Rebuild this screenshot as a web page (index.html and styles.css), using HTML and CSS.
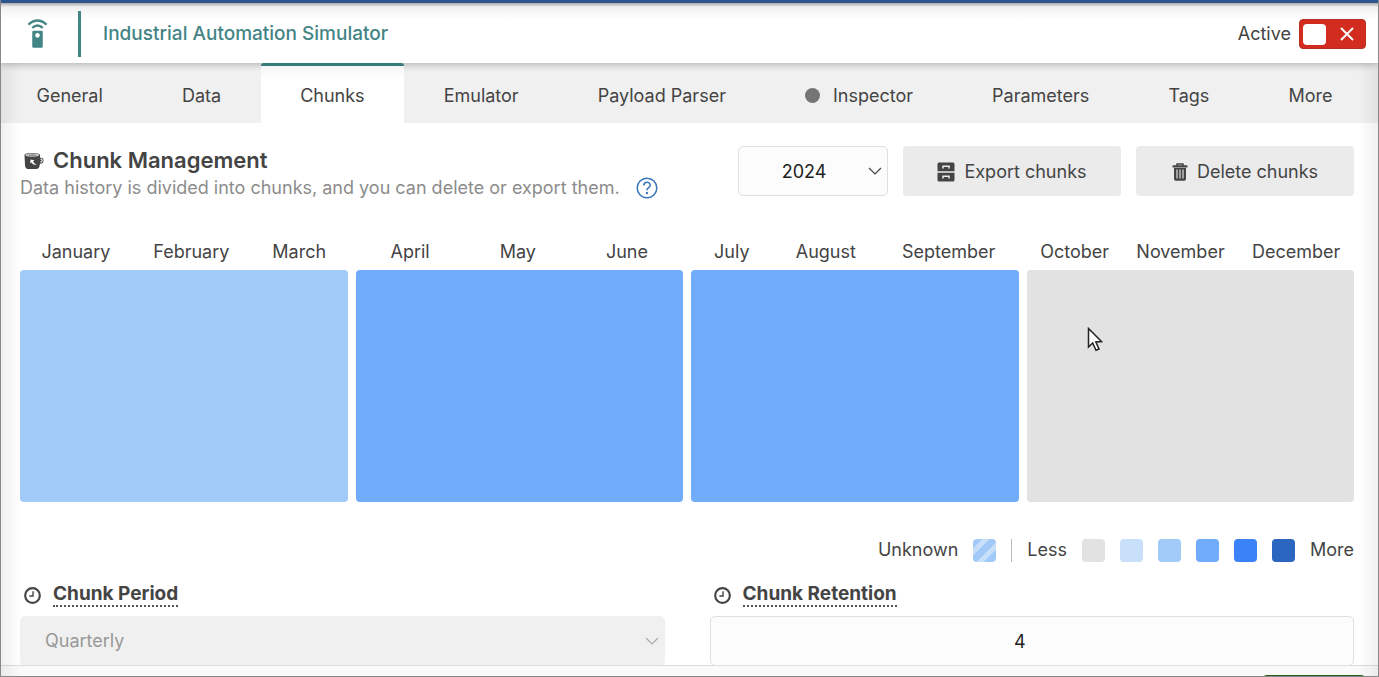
FILE: index.html
```
<!DOCTYPE html>
<html lang="en">
<head>
<meta charset="utf-8">
<meta name="viewport" content="width=device-width, initial-scale=1">
<title>Industrial Automation Simulator</title>
<link rel="stylesheet" href="styles.css">
</head>
<body>
<div class="app">
  <header class="header">
    <svg class="device-icon" viewBox="0 0 22 32" aria-hidden="true">
      <g fill="none" stroke="currentColor" stroke-width="2.4" stroke-linecap="butt">
        <path d="M1.500 6.200Q11-2.400 20.500 6.200"/>
        <path d="M5.500 9.600Q11 4.600 16.500 9.600"/>
      </g>
      <path fill="currentColor" fill-rule="evenodd" d="M7 12.500h8q1.500 0 1.500 1.500v15q0 1.500-1.500 1.500H7Q5.500 30.500 5.500 29V14Q5.500 12.500 7 12.500zM11 15a2.400 2.400 0 1 0 0 4.800 2.400 2.400 0 1 0 0-4.800z"/>
    </svg>
    <h1 class="device-name">Industrial Automation Simulator</h1>
    <label class="active-label" for="active">Active</label>
    <span class="switch">
      <input class="switch-input" type="checkbox" id="active">
      <svg class="switch-cross" viewBox="0 0 14 14" aria-hidden="true"><path d="M1 1l12 12M13 1L1 13" fill="none" stroke="currentColor" stroke-width="2"/></svg>
    </span>
  </header>
  <nav class="tabs">
    <a class="tab" href="#general">General</a>
    <a class="tab" href="#data">Data</a>
    <a class="tab tab-current" href="#chunks" aria-current="page">Chunks</a>
    <a class="tab" href="#emulator">Emulator</a>
    <a class="tab" href="#parser">Payload Parser</a>
    <a class="tab" href="#inspector"><span class="dot"></span>Inspector</a>
    <a class="tab" href="#parameters">Parameters</a>
    <a class="tab" href="#tags">Tags</a>
    <a class="tab" href="#more">More</a>
  </nav>
  <main class="content">
    <section class="toolbar">
      <div class="intro">
        <h2 class="title">
          <svg class="title-icon" viewBox="0 0 20 18" aria-hidden="true">
            <path fill="currentColor" d="M.5 3C.5.300 16 .300 16 3v2.800c2.300-.3 3.500.7 3.500 2.700 0 2.300-1.300 3.300-3.500 3.200L15.500 14c-.2 2-1.500 3-3.500 3H5c-2.500 0-3.800-1.200-4-3.600z"/>
            <ellipse cx="8.200" cy="3.100" rx="6.400" ry="1" fill="none" stroke="#fff" stroke-width=".9"/>
            <path fill="#fff" d="M6.500 7.500l3.800.8-1.100 1.300c.7 1.700 2 2.700 4 3-2.900.5-4.800-.5-5.600-2.200l-1.300.8z"/>
            <path fill="none" stroke="#fff" stroke-width="1.100" d="M16.500 7.300q1.700-.2 1.600 1.300t-1.600 1.700"/>
          </svg>
          Chunk Management
        </h2>
        <p class="subtitle">Data history is divided into chunks, and you can delete or export them.
          <a class="help" href="#help" aria-label="Help">
            <svg class="help-icon" viewBox="0 0 22 22" aria-hidden="true">
              <circle cx="11" cy="11" r="9.800" fill="none" stroke="currentColor" stroke-width="1.500"/>
              <path d="M7.800 8.500C7.900 4.200 14.200 4.300 14.200 8.200c0 2.500-3.200 2.500-3.200 5" fill="none" stroke="currentColor" stroke-width="1.600"/>
              <circle cx="11" cy="16" r="1.200" fill="currentColor"/>
            </svg>
          </a>
        </p>
      </div>
      <div class="select-wrap year">
        <select class="field year-select" aria-label="Year"><option>2024</option></select>
        <svg class="chevron" viewBox="0 0 14 8" aria-hidden="true"><path d="M1 1l6 6 6-6" fill="none" stroke="currentColor" stroke-width="1.200"/></svg>
      </div>
      <button class="button" type="button">
        <svg class="cabinet-icon" viewBox="0 0 18 20" aria-hidden="true">
          <path fill="currentColor" d="M2 .5h14q1.500 0 1.500 1.500v7.200H.5V2Q.5.500 2 .500zM.5 10.800h17V18q0 1.500-1.500 1.500H2Q.5 19.500.5 18z"/>
          <path fill="none" stroke="#ebebeb" stroke-width="1.500" d="M6 6.500V4.300h6v2.200M6 16.500v-2.200h6v2.200"/>
        </svg>
        Export chunks
      </button>
      <button class="button" type="button">
        <svg class="trash-icon" viewBox="0 0 16 18" aria-hidden="true">
          <path fill="none" stroke="currentColor" stroke-width="1.500" d="M5 3V1h6v2"/>
          <path fill="currentColor" d="M.5 3Q.5 2.300 1.200 2.300h13.600q.7 0 .7.700v1.500H.5zM2 5h12v11q0 1.700-1.700 1.700H3.700Q2 17.700 2 16z"/>
          <path stroke="#ebebeb" stroke-width="1.100" d="M5 6.500v9M8 6.500v9M11 6.500v9"/>
        </svg>
        Delete chunks
      </button>
    </section>

    <section class="quarters">
      <div class="quarter">
        <div class="months"><span>January</span><span>February</span><span>March</span></div>
        <button class="chunk level-2" type="button" aria-label="January to March"></button>
      </div>
      <div class="quarter">
        <div class="months"><span>April</span><span>May</span><span>June</span></div>
        <button class="chunk level-3" type="button" aria-label="April to June"></button>
      </div>
      <div class="quarter">
        <div class="months"><span>July</span><span>August</span><span>September</span></div>
        <button class="chunk level-3" type="button" aria-label="July to September"></button>
      </div>
      <div class="quarter">
        <div class="months"><span>October</span><span>November</span><span>December</span></div>
        <button class="chunk level-0" type="button" aria-label="October to December"></button>
      </div>
    </section>

    <div class="legend">
      <span>Unknown</span>
      <span class="swatch unknown"></span>
      <span class="divider"></span>
      <span>Less</span>
      <span class="swatch level-0"></span>
      <span class="swatch level-1"></span>
      <span class="swatch level-2"></span>
      <span class="swatch level-3"></span>
      <span class="swatch level-4"></span>
      <span class="swatch level-5"></span>
      <span>More</span>
    </div>

    <form class="settings">
      <div class="setting">
        <div class="setting-head">
          <svg class="clock-icon" viewBox="0 0 16 16" aria-hidden="true"><circle cx="8" cy="8" r="6.900" fill="none" stroke="currentColor" stroke-width="2"/><path d="M8.500 4v4.500H5" fill="none" stroke="currentColor" stroke-width="1.300"/></svg>
          <label class="setting-label" for="period">Chunk Period</label>
        </div>
        <div class="select-wrap">
          <select class="field period-select" id="period" disabled><option>Quarterly</option></select>
          <svg class="chevron chevron-muted" viewBox="0 0 14 8" aria-hidden="true"><path d="M1 1l6 6 6-6" fill="none" stroke="currentColor" stroke-width="1.200"/></svg>
        </div>
      </div>
      <div class="setting">
        <div class="setting-head">
          <svg class="clock-icon" viewBox="0 0 16 16" aria-hidden="true"><circle cx="8" cy="8" r="6.900" fill="none" stroke="currentColor" stroke-width="2"/><path d="M8.500 4v4.500H5" fill="none" stroke="currentColor" stroke-width="1.300"/></svg>
          <label class="setting-label" for="retention">Chunk Retention</label>
        </div>
        <input class="field retention" id="retention" type="text" inputmode="numeric" value="4">
      </div>
    </form>
    <svg class="cursor" viewBox="0 0 16 25" aria-hidden="true"><path d="M1.500 1.500v18.500l4.200-4 3.300 7.300 3-1.300-3.200-7.100 5.700-.4z" fill="#fff" stroke="#222" stroke-width="1.500"/></svg>
  </main>
  <footer class="footer"><button class="save" type="button" aria-label="Save"></button></footer>
</div>
</body>
</html>
```
FILE: styles.css
```
* {
  box-sizing: border-box;
}

body {
  margin: 0;
  background: #fff;
  color: #444;
  font-family: Inter, "Liberation Sans", sans-serif;
  font-size: 18px;
  line-height: 24px;
}

h1, h2, p {
  margin: 0;
}

button, input, select {
  font: inherit;
  color: inherit;
}

.app {
  position: relative;
  display: flex;
  flex-direction: column;
  height: 100vh;
  overflow: hidden;
  border: 1px solid #888;
  border-top: 0;
}

.app::after {
  content: "";
  position: absolute;
  inset: 4px 0 0;
  pointer-events: none;
  background:
    linear-gradient(to right, rgba(0, 0, 0, 0.06), transparent 20px),
    linear-gradient(to left, rgba(0, 0, 0, 0.06), transparent 20px);
}

.header {
  position: relative;
  z-index: 1;
  flex: none;
  display: flex;
  align-items: center;
  height: 63px;
  padding: 1px 12px 0 26px;
  border-top: 3px solid #2b558c;
  background: linear-gradient(#aaa, #f0f0f0 4px, #fff 16px);
  box-shadow: 0 1px 8px rgba(0, 0, 0, 0.3);
}

.device-icon {
  width: 21px;
  height: 32px;
  color: #438485;
}

.device-name {
  flex: 1;
  margin-left: 30px;
  padding-left: 22px;
  border-left: 3px solid #438485;
  color: #438485;
  font-size: 19px;
  font-weight: 500;
  line-height: 46px;
}

.active-label {
  margin-right: 8px;
}

.switch {
  position: relative;
  display: flex;
}

.switch-input {
  appearance: none;
  width: 67px;
  height: 30px;
  margin: 0;
  padding: 4px 3px;
  border: 1px solid #b9301f;
  border-radius: 4px;
  background: #d12c1d;
}

.switch-input::before {
  content: "";
  display: block;
  width: 23px;
  height: 21px;
  border-radius: 4px;
  background: #fff;
}

.switch-cross {
  position: absolute;
  top: 8px;
  right: 12px;
  width: 14px;
  height: 14px;
  color: #fff;
  pointer-events: none;
}

.tabs {
  flex: none;
  display: flex;
  height: 60px;
  margin-left: -4px;
  padding-right: 6px;
  background: #f0f0f0;
}

.tab {
  flex: 1 1 auto;
  display: flex;
  align-items: center;
  justify-content: center;
  padding-top: 5px;
  color: #444;
  text-decoration: none;
}

.tab-current {
  position: relative;
  z-index: 2;
  padding-top: 2px;
  border-top: 3px solid #35797b;
  border-radius: 3px 3px 0 0;
  background: linear-gradient(#f5f5f5, #fff 14px);
}

.dot {
  width: 15px;
  height: 15px;
  margin-right: 13px;
  border-radius: 50%;
  background: #757575;
}

.content {
  position: relative;
  flex: 1;
  min-height: 0;
  overflow: hidden;
  padding: 23px 24px 0 19px;
}

.toolbar {
  display: flex;
  gap: 15px;
}

.intro {
  flex: 1;
}

.title {
  display: flex;
  align-items: center;
  gap: 9px;
  padding-left: 4px;
  font-size: 22px;
  font-weight: 600;
  line-height: 29px;
}

.title-icon {
  width: 20px;
  height: 18px;
}

.subtitle {
  display: flex;
  align-items: center;
  gap: 16px;
  color: #8c8c8c;
  line-height: 26px;
}

.help {
  display: flex;
  color: #3c76bb;
}

.help-icon {
  width: 22px;
  height: 22px;
}

.select-wrap {
  position: relative;
}

.year {
  width: 150px;
}

.field {
  appearance: none;
  display: block;
  width: 100%;
  height: 50px;
  border: 1px solid #e0e0e0;
  border-radius: 5px;
  background: #fcfcfc;
  color: #222;
}

.year-select {
  padding: 2px 18px 0 0;
  text-align-last: center;
}

.chevron {
  position: absolute;
  top: 21px;
  right: 6px;
  width: 14px;
  height: 8px;
  pointer-events: none;
}

.chevron-muted {
  color: #aaa;
}

.button {
  display: flex;
  align-items: center;
  justify-content: center;
  gap: 9px;
  width: 218px;
  height: 50px;
  padding: 2px 0 0;
  border: 0;
  border-radius: 4px;
  background: #ebebeb;
}

.cabinet-icon {
  width: 18px;
  height: 20px;
}

.trash-icon {
  width: 16px;
  height: 18px;
}

.quarters {
  display: grid;
  grid-template-columns: repeat(4, 1fr);
  gap: 8px;
  margin-top: 39px;
}

.months {
  display: flex;
  justify-content: space-around;
  height: 30px;
}

.chunk {
  display: block;
  width: 100%;
  height: 232px;
  padding: 0;
  border: 0;
  border-radius: 4px;
}

.legend {
  display: flex;
  align-items: center;
  justify-content: flex-end;
  gap: 15px;
  margin-top: 36px;
}

.swatch {
  width: 23px;
  height: 23px;
  border-radius: 4px;
}

.divider {
  width: 1px;
  height: 23px;
  background: #bbb;
}

.unknown {
  background: repeating-linear-gradient(135deg, #a2caf9 0 7px, #c8dffa 7px 12px);
}

.level-0 { background: #e2e2e2; }
.level-1 { background: #c8dffa; }
.level-2 { background: #a2caf9; }
.level-3 { background: #70acf9; }
.level-4 { background: #3b82f6; }
.level-5 { background: #2b66c1; }

.settings {
  display: grid;
  grid-template-columns: 1fr 1fr;
  gap: 45px;
  margin-top: 21px;
}

.setting-head {
  display: flex;
  align-items: center;
  gap: 12px;
  height: 24px;
  margin-bottom: 9px;
  padding-left: 4px;
}

.clock-icon {
  width: 17px;
  height: 17px;
}

.setting-label {
  border-bottom: 2px dotted #555;
  font-size: 19px;
  font-weight: 700;
  line-height: 22px;
}

.period-select {
  padding-left: 24px;
  border-color: #f0f0f0;
  background: #f0f0f0;
  color: #999;
  opacity: 1;
}

.retention {
  padding: 0 24px 0 0;
  text-align: center;
}

.cursor {
  position: absolute;
  left: 1086px;
  top: 204px;
  width: 16px;
  height: 25px;
}

.footer {
  flex: none;
  display: flex;
  justify-content: flex-end;
  height: 11px;
  padding: 9px 13px 0 0;
  border-top: 1px solid #ddd;
  background: #fafafa;
  overflow: hidden;
}

.save {
  flex: none;
  width: 102px;
  height: 40px;
  padding: 0;
  border: 0;
  border-radius: 4px;
  background: #245c16;
}
```
